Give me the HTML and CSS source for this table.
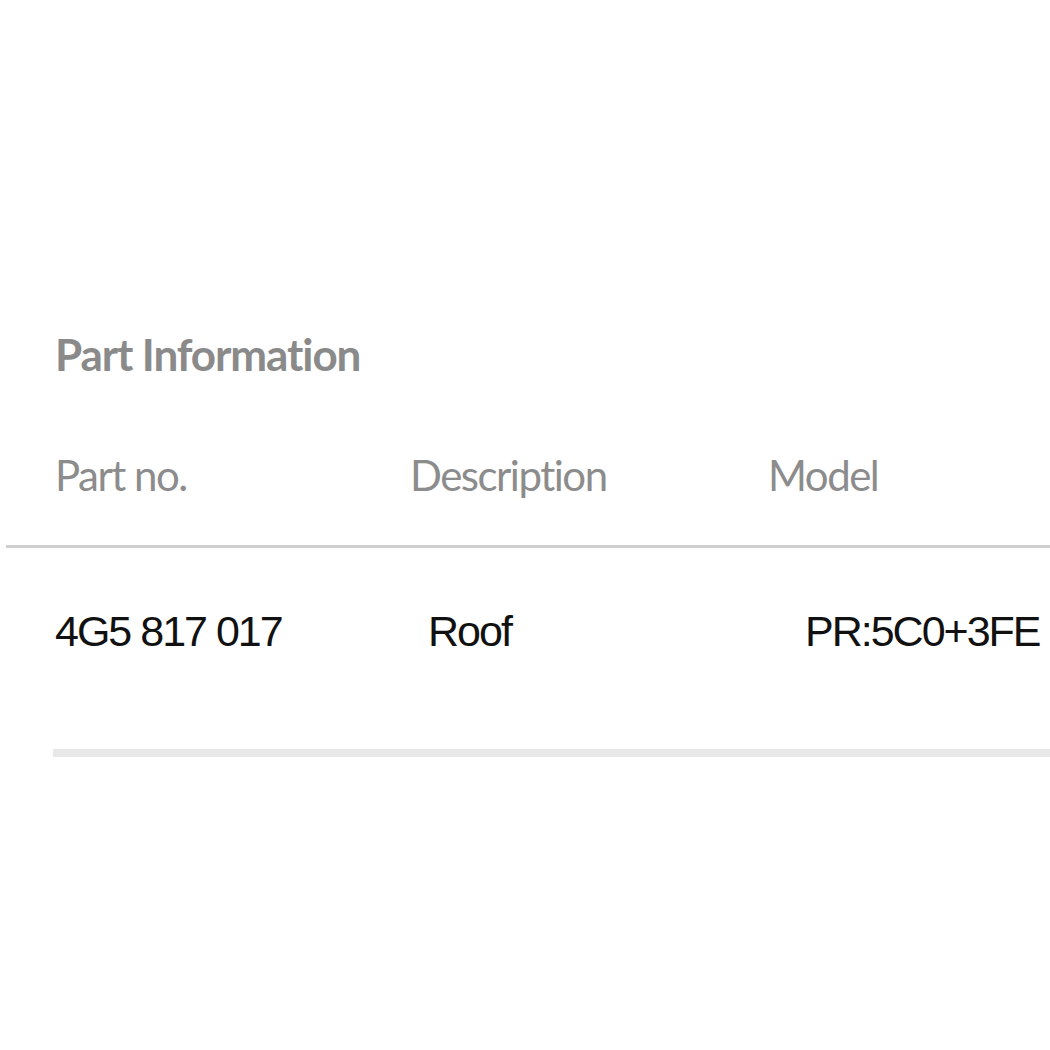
FILE: index.html
```html
<!DOCTYPE html>
<html lang="en">
<head>
    <meta charset="UTF-8">
    <meta name="viewport" content="width=device-width, initial-scale=1.0">
    <link rel="stylesheet" href="styles.css">
    <title>Part Information</title>
</head>
<body>
    <div class="panel">
        <h2 class="section-title">Part Information</h2>
        <div class="parts">
            <div class="parts-head">
                <div class="col col-no">Part no.</div>
                <div class="col col-desc">Description</div>
                <div class="col col-model">Model</div>
            </div>
            <div class="parts-row">
                <div class="cell cell-no">4G5 817 017</div>
                <div class="cell cell-desc">Roof</div>
                <div class="cell cell-model">PR:5C0+3FE</div>
            </div>
        </div>
    </div>
</body>
</html>
```

FILE: styles.css
```css
body {
    margin: 0;
    background: #fff;
}

.panel {
    padding-top: 326px;
    overflow: hidden;
}

.section-title {
    margin: 0 0 0 55px;
    font-family: Lato, "Noto Sans", sans-serif;
    font-weight: bold;
    font-size: 44px;
    line-height: 56px;
    letter-spacing: -1.1px;
    color: #8a8a8a;
}

.parts-head {
    display: grid;
    grid-template-columns: 355px 358px 1fr;
    margin-left: 6px;
    padding: 65px 0 42px 49px;
    border-bottom: 3px solid #cfcfcf;
}

.col {
    font-family: Lato, "Noto Sans", sans-serif;
    font-size: 42px;
    line-height: 56px;
    letter-spacing: -1.5px;
    color: #8c8c8c;
}

.parts-row {
    display: grid;
    grid-template-columns: 373px 377px 1fr;
    margin-left: 53px;
    padding: 55px 0 90px 2px;
    border-bottom: 8px solid #e8e8e8;
}

.cell {
    font-family: "Liberation Sans", Arial, sans-serif;
    font-size: 43px;
    line-height: 56px;
    letter-spacing: -2px;
    color: #111;
    white-space: nowrap;
}
```
